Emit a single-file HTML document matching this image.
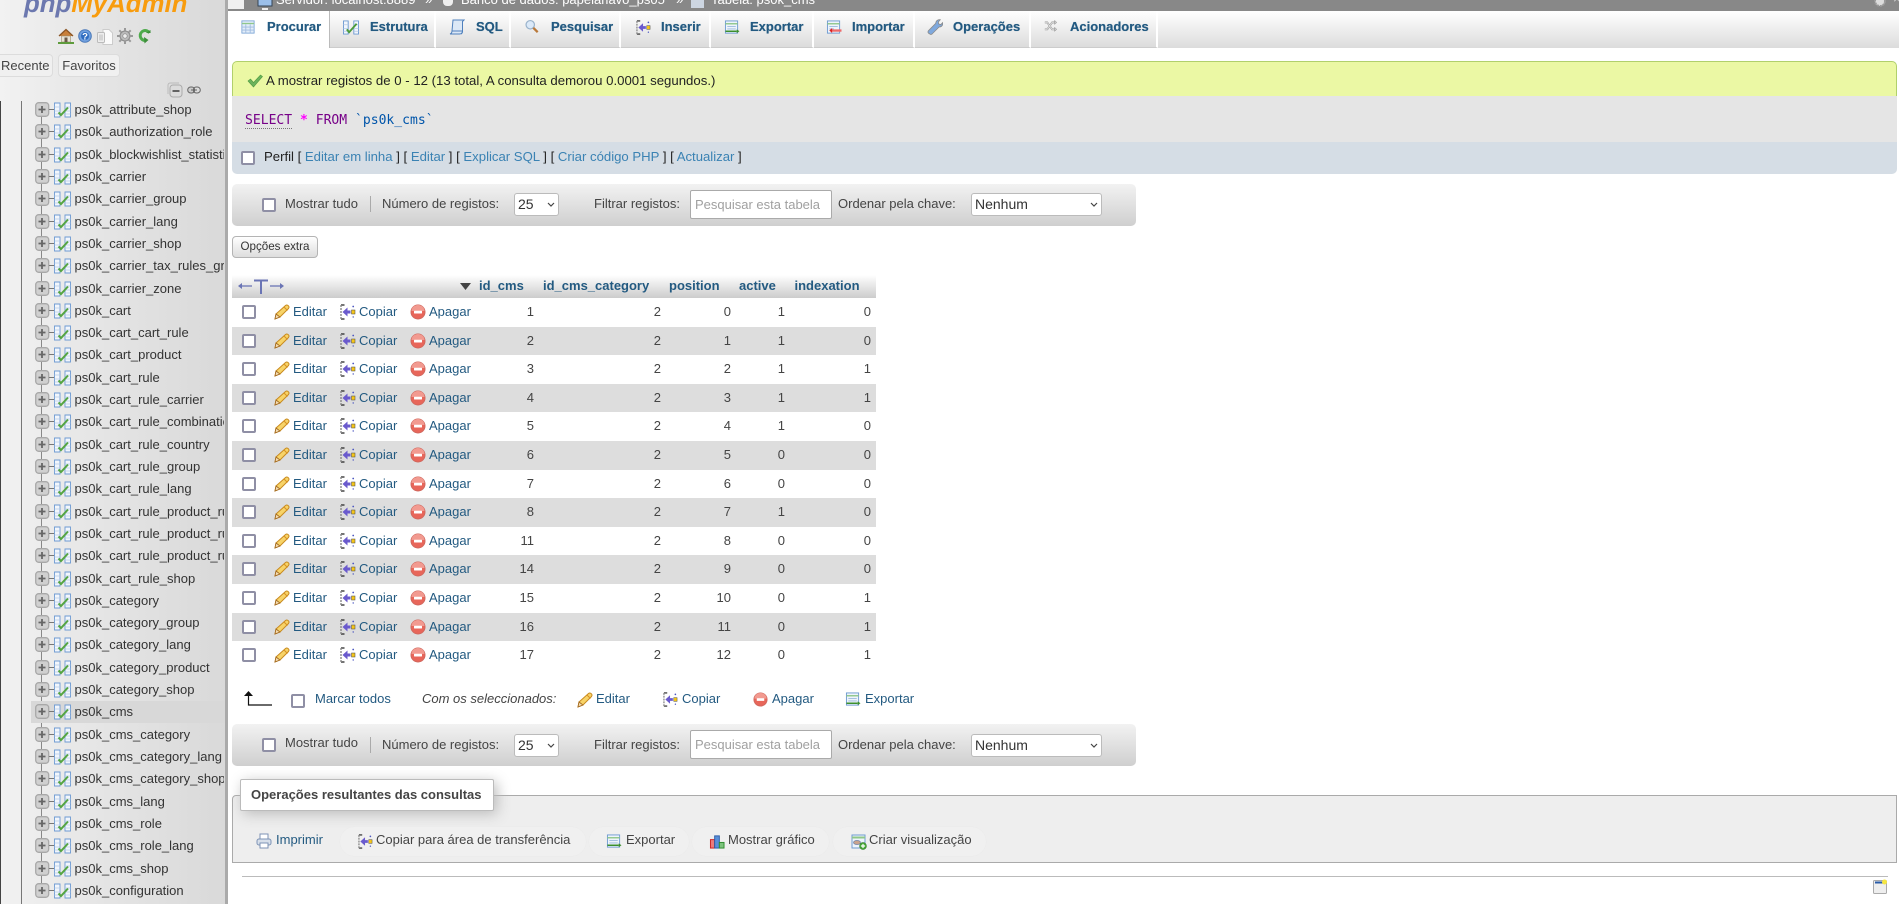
<!DOCTYPE html>
<html lang="pt"><head><meta charset="utf-8"><title>phpMyAdmin</title>
<style>
html,body{margin:0;padding:0;width:1899px;height:904px;overflow:hidden;background:#fff}
body{position:relative;font:13px/16px "Liberation Sans",Arial,sans-serif;color:#444}
.a{position:absolute;white-space:nowrap}
svg{position:absolute;overflow:visible}
a,.l{color:#235a81}
#side{position:absolute;left:0;top:0;width:225px;height:904px;overflow:hidden;background:linear-gradient(90deg,#f2f2f2,#e6e6e6 40%,#d9d9d9)}
#bar{position:absolute;left:225px;top:0;width:3px;height:904px;background:#aaa}
.t{position:absolute;left:31px;width:193px;height:22px;line-height:22px;padding-left:43.5px;box-sizing:border-box;overflow:hidden;white-space:nowrap;color:#333}
.t svg{left:4px;top:3px;width:40px;height:16px}
.tab{position:absolute;top:11px;height:37px;box-sizing:border-box;background:linear-gradient(#fff,#dcdcdc);border-right:2px solid #fff;border-bottom:1px solid #ccc}
.tl{position:absolute;top:19px;font-weight:bold;color:#235a81;white-space:nowrap;text-shadow:0 0 .5px #235a81}
.cb{position:absolute;width:10px;height:10px;background:#fff;border:2px solid #8f8fa5;border-radius:2px}
.nav{position:absolute;left:232px;width:904px;height:42px;border-radius:5px;background:linear-gradient(#f2f2f2,#cfcfcf)}
.sel{position:absolute;box-sizing:border-box;background:#fff;border:1px solid #bbb;border-radius:3px;height:23px;line-height:21px;padding-left:3px;color:#333;font-size:14px}
.sel svg{top:8px;width:8px;height:5px}
.inp{position:absolute;box-sizing:border-box;background:#fff;border:1px solid #aaa;border-radius:2px;height:29px;line-height:27px;padding-left:4px;color:#a0a0a0;white-space:nowrap;overflow:hidden}
.r{position:absolute;left:232px;width:644px;height:28.6px;line-height:27px}
.r .cb{left:10px;top:7px}
.r svg{width:16px;height:16px;top:6px}
.r span{position:absolute;white-space:nowrap;top:0}
.r .e{left:61px;color:#235a81}.r .c{left:127px;color:#235a81}.r .d{left:197px;color:#235a81}
.r .n{text-align:right;width:40px;color:#444}
.n1{left:262px}.n2{left:389px}.n3{left:459px}.n4{left:513px}.n5{left:599px}
.g{background:#ddd}
.i1{left:42px}.i2{left:108px}.i3{left:178px}
.th{position:absolute;top:278px;font-weight:bold;color:#235a81;white-space:nowrap}
.pill{position:absolute;top:827px;height:29px;border-radius:15px;background:#f0f0f0;box-shadow:0 0 1px #e6e6e6}
.lk{color:#3a82b3}
</style></head><body>
<svg width="0" height="0" style="position:absolute">
<defs>
<symbol id="tr" viewBox="0 0 40 16">
<rect x=".7" y=".7" width="13" height="13.600" rx="3" fill="#d0d0d0" stroke="#a8a8a8" stroke-width="1.300"/><path d="M3.500 7.500h7M7 4v7" stroke="#666" stroke-width="1.800"/><path d="M14 7.500h5" stroke="#777"/>
<g fill="#f2f6fc" stroke="#6d9ad2" stroke-width=".9"><path d="M19.500 1h5.500v14h-5.500zM30 1h5.500v14H30z"/></g><path d="M19.500 5h5.500M19.500 9h5.500M19.500 12h5.500M30 5h5.500M30 9h5.500M30 12h5.500" stroke="#b5cbe6" stroke-width=".8"/><path d="M23.500 10.500l2.500 2.500 7-7.500" fill="none" stroke="#55a542" stroke-width="2"/>
</symbol>
<symbol id="pen" viewBox="0 0 16 16"><path d="M1 15l1-5L11.500 1.500c1-.8 2-.6 2.800.2s1 1.700.2 2.800L6 13z" fill="#f7d368" stroke="#c98a1e"/><path d="M1 15l1-5 4 3z" fill="#f4dcb0" stroke="#a0661c" stroke-width=".8"/><path d="M10 3l3.500 3.500" stroke="#d98f20"/></symbol>
<symbol id="cp" viewBox="0 0 16 16"><path d="M1 1h3.500M1 15h3.500" stroke="#222" stroke-width="1.200"/><path d="M1 1v14" stroke="#888" stroke-width="1.400" stroke-dasharray="2 1"/><path d="M2.500 8l5-4.500V6.500h3v3h-3v3z" fill="#6a5acd"/><rect x="11.500" y="6" width="3.500" height="4" fill="#f5c518" stroke="#444" stroke-width=".5"/><circle cx="13.200" cy="2.500" r=".9" fill="#4a55c0"/><circle cx="13.200" cy="13" r=".7" fill="#4a55c0"/></symbol>
<symbol id="del" viewBox="0 0 16 16"><circle cx="8" cy="8" r="7" fill="#e8665a" stroke="#d0685e"/><path d="M1.500 7a6.500 6 0 0 1 13 0z" fill="#f29a90"/><rect x="4" y="6.700" width="8" height="2.800" rx=".5" fill="#fff"/></symbol>
<symbol id="ex" viewBox="0 0 16 16"><rect x="1" y="1" width="13" height="13" fill="#eef4fb" stroke="#6f9bd1"/><path d="M1 4h13" stroke="#8fc78a" stroke-width="1.500"/><path d="M3 7h9M3 9.500h9" stroke="#9ab8dc"/><path d="M1 12h12" stroke="#3c8f2c" stroke-width="1.600"/><path d="M13 10l3 2-3 2z" fill="#3c8f2c"/></symbol>
<symbol id="im" viewBox="0 0 16 16"><rect x="1" y="1" width="13" height="13" fill="#eef4fb" stroke="#6f9bd1"/><path d="M1 4h13" stroke="#8fc78a" stroke-width="1.500"/><path d="M3 7h9M3 9.500h5" stroke="#9ab8dc"/><path d="M5 10h11v2.500H5z" fill="#ee6a6a"/><path d="M6 8.500l-3 2.700 3 2.700z" fill="#d22"/></symbol>
<symbol id="tb" viewBox="0 0 16 16"><rect x="1" y="1" width="14" height="14" fill="#e2edf9" stroke="#7ba4d6"/><path d="M1 4h14" stroke="#8fc78a" stroke-width="1.500"/><path d="M1 8h14M1 11.500h14M5.500 5v10M10.500 5v10" stroke="#9ebbe0"/></symbol>
<symbol id="st" viewBox="0 0 16 16"><g fill="#f2f6fc" stroke="#6d9ad2"><path d="M0 1h5v14H0zM11 1h5v14h-5z"/></g><path d="M0 5h5M0 9h5M0 12h5M11 5h5M11 9h5M11 12h5" stroke="#b5cbe6" stroke-width=".8"/><path d="M3.500 10l2.500 3 8-9" fill="none" stroke="#4a9a38" stroke-width="2"/></symbol>
<symbol id="sq" viewBox="0 0 16 16"><path d="M4 1h11l-1.500 1.500V12c0 2-1 3-3 3H1c1.500-.5 2-1.500 2-3z" fill="#dce8f6" stroke="#4f80bd"/><path d="M12 15c1-.5 1.500-1.500 1.500-3H3" fill="none" stroke="#4f80bd"/></symbol>
<symbol id="se" viewBox="0 0 16 16"><circle cx="6" cy="6" r="4.800" fill="#dbe9f8" stroke="#9ab3cc" stroke-width="1.400"/><path d="M9.500 9.500l5 5" stroke="#b9793a" stroke-width="2.600"/></symbol>
<symbol id="wr" viewBox="0 0 16 16"><path d="M1.800 14.500c-1.200-1-1-2.200 0-3.200l7-7c0-2.500 2-4 4.500-3.500l-2 2.200.5 2 2 .5 2-2c.5 2.500-1.200 4.500-3.700 4.500l-7 7c-1 .7-2.100.5-2.800-.5z" fill="#7fa9de" stroke="#8a8a8a" stroke-width=".8"/></symbol>
<symbol id="tg" viewBox="0 0 16 16"><path d="M1 3h3l6 8.500h3M1 11.500h3l6-8.500h3" fill="none" stroke="#9a9a9a" stroke-width="2.200"/><path d="M1 3h3l6 8.500h3M1 11.500h3l6-8.500h3" fill="none" stroke="#eee" stroke-width=".8"/><path d="M13 .5l2.700 2.500L13 5.500zM13 9l2.700 2.500L13 14z" fill="#ccc" stroke="#888" stroke-width=".6"/></symbol>
<symbol id="pr" viewBox="0 0 16 16"><rect x="4" y="1" width="8" height="6" fill="#fff" stroke="#7d93b5"/><rect x="1" y="6" width="14" height="6" rx="2" fill="#d7dfea" stroke="#7d93b5"/><rect x="4" y="10" width="8" height="5" fill="#fff" stroke="#7d93b5"/></symbol>
<symbol id="gr" viewBox="0 0 16 16"><rect x="1" y="6" width="4.500" height="9" fill="#ec7b7b" stroke="#c22"/><rect x="5.500" y="2" width="5" height="13" fill="#5a8fd8" stroke="#2a5ca8"/><rect x="10.500" y="9" width="5" height="6" fill="#7cc37c" stroke="#2d8a2d"/></symbol>
<symbol id="vw" viewBox="0 0 16 16"><rect x="1" y="1" width="13" height="13" fill="#eef4fb" stroke="#6f9bd1"/><path d="M1 3.500h13" stroke="#8fc78a" stroke-width="2"/><ellipse cx="6" cy="8.500" rx="3.500" ry="2" fill="#c9a38c" stroke="#6f7fa0" stroke-width=".7"/><circle cx="12" cy="12" r="3.400" fill="#4caa3c" stroke="#2c7a22" stroke-width=".6"/><path d="M10 12h4M12 10v4" stroke="#fff" stroke-width="1.200"/></symbol>
</defs></svg>

<div id="side">
<div class="a" style="left:24px;top:-11px;font:italic bold 25.8px/30px 'Liberation Sans',sans-serif"><span style="color:#6c78af">php</span><span style="color:#f89c0e">MyAdmin</span></div>
<svg style="left:58px;top:28px" width="16" height="16" viewBox="0 0 16 16"><path d="M1 8l7-6.500L15 8" fill="#c9803a" stroke="#8a5526" stroke-width="1.300"/><rect x="3.500" y="8" width="9" height="6" fill="#e8e4d8" stroke="#9a8a6a" stroke-width=".6"/><rect x="6.500" y="9.500" width="3" height="4.500" fill="#6a5a4a"/><path d="M0 15h16" stroke="#5e9b3c" stroke-width="2"/></svg>
<svg style="left:78px;top:29px" width="14" height="14" viewBox="0 0 14 14"><circle cx="7" cy="7" r="6.300" fill="#6f9fde" stroke="#4a78b8"/><circle cx="7" cy="7" r="4" fill="#2f6cc0"/><text x="7" y="10.500" text-anchor="middle" font-size="9.500" font-weight="bold" fill="#fff" font-family="Liberation Sans">?</text></svg>
<svg style="left:97px;top:29px" width="16" height="16" viewBox="0 0 16 16"><path d="M6 .5h6l3.500 3.500v11.500H6z" fill="#fbfbfb" stroke="#ccc"/><rect x=".5" y="3.500" width="7" height="10" rx="1" fill="#eee" stroke="#bbb"/><path d="M3 5.500v6M5 5.500v6" stroke="#bbb"/></svg>
<svg style="left:117px;top:28px" width="16" height="16" viewBox="0 0 16 16"><circle cx="8" cy="8" r="5" fill="#bbb" stroke="#888"/><circle cx="8" cy="8" r="2.200" fill="#eee" stroke="#888" stroke-width=".7"/><path d="M8 0v3M8 13v3M0 8h3M13 8h3M2.300 2.300l2 2M11.700 11.700l2 2M13.700 2.300l-2 2M4.300 11.700l-2 2" stroke="#999" stroke-width="2"/></svg>
<svg style="left:138px;top:29px" width="13" height="15" viewBox="0 0 13 15"><path d="M11.500 4A5 5 0 1 0 7.500 11.500" fill="none" stroke="#4eaa4c" stroke-width="3"/><path d="M6 8l4.500 3L6.500 14.500zM8 4h4.500v-3" fill="#3d8f3b"/></svg>
<div class="a" style="left:-9px;top:54px;width:62px;height:23px;box-sizing:border-box;background:#f0f0f0;border:1px solid #dcdcdc;border-radius:4px;line-height:21px;padding-left:9px;color:#444">Recente</div>
<div class="a" style="left:58px;top:54px;width:62px;height:23px;box-sizing:border-box;background:#f0f0f0;border:1px solid #dcdcdc;border-radius:4px;line-height:21px;text-align:center;color:#444">Favoritos</div>
<svg style="left:167px;top:82px" width="16" height="16" viewBox="0 0 16 16"><rect x="3" y="3" width="12" height="12" rx="3" fill="#dcdcdc" stroke="#aaa"/><path d="M1 12V3c0-1 1-2 2-2h9" fill="none" stroke="#bbb"/><path d="M5.500 9h7" stroke="#555" stroke-width="1.800"/></svg>
<svg style="left:187px;top:86px" width="14" height="9" viewBox="0 0 14 9"><rect x=".7" y="1" width="7" height="6" rx="3" fill="#ccc" stroke="#666"/><rect x="6.300" y="1" width="7" height="6" rx="3" fill="none" stroke="#666"/><path d="M4 4h6" stroke="#666"/></svg>
<div class="a" style="left:0;top:101px;width:1px;height:803px;background:#444"></div>
<div class="a" style="left:21px;top:101px;width:1px;height:803px;background:#777"></div>
<div class="a" style="left:41px;top:110px;width:1px;height:781px;background:#888"></div>
<div class="t" style="top:99px"><svg><use href="#tr"/></svg>ps0k_attribute_shop</div>
<div class="t" style="top:121px"><svg><use href="#tr"/></svg>ps0k_authorization_role</div>
<div class="t" style="top:144px"><svg><use href="#tr"/></svg>ps0k_blockwishlist_statistics</div>
<div class="t" style="top:166px"><svg><use href="#tr"/></svg>ps0k_carrier</div>
<div class="t" style="top:188px"><svg><use href="#tr"/></svg>ps0k_carrier_group</div>
<div class="t" style="top:211px"><svg><use href="#tr"/></svg>ps0k_carrier_lang</div>
<div class="t" style="top:233px"><svg><use href="#tr"/></svg>ps0k_carrier_shop</div>
<div class="t" style="top:255px"><svg><use href="#tr"/></svg>ps0k_carrier_tax_rules_group_shop</div>
<div class="t" style="top:278px"><svg><use href="#tr"/></svg>ps0k_carrier_zone</div>
<div class="t" style="top:300px"><svg><use href="#tr"/></svg>ps0k_cart</div>
<div class="t" style="top:322px"><svg><use href="#tr"/></svg>ps0k_cart_cart_rule</div>
<div class="t" style="top:344px"><svg><use href="#tr"/></svg>ps0k_cart_product</div>
<div class="t" style="top:367px"><svg><use href="#tr"/></svg>ps0k_cart_rule</div>
<div class="t" style="top:389px"><svg><use href="#tr"/></svg>ps0k_cart_rule_carrier</div>
<div class="t" style="top:411px"><svg><use href="#tr"/></svg>ps0k_cart_rule_combination</div>
<div class="t" style="top:434px"><svg><use href="#tr"/></svg>ps0k_cart_rule_country</div>
<div class="t" style="top:456px"><svg><use href="#tr"/></svg>ps0k_cart_rule_group</div>
<div class="t" style="top:478px"><svg><use href="#tr"/></svg>ps0k_cart_rule_lang</div>
<div class="t" style="top:501px"><svg><use href="#tr"/></svg>ps0k_cart_rule_product_rule</div>
<div class="t" style="top:523px"><svg><use href="#tr"/></svg>ps0k_cart_rule_product_rule_group</div>
<div class="t" style="top:545px"><svg><use href="#tr"/></svg>ps0k_cart_rule_product_rule_value</div>
<div class="t" style="top:568px"><svg><use href="#tr"/></svg>ps0k_cart_rule_shop</div>
<div class="t" style="top:590px"><svg><use href="#tr"/></svg>ps0k_category</div>
<div class="t" style="top:612px"><svg><use href="#tr"/></svg>ps0k_category_group</div>
<div class="t" style="top:634px"><svg><use href="#tr"/></svg>ps0k_category_lang</div>
<div class="t" style="top:657px"><svg><use href="#tr"/></svg>ps0k_category_product</div>
<div class="t" style="top:679px"><svg><use href="#tr"/></svg>ps0k_category_shop</div>
<div class="t" style="top:701px;width:194px;background:#d8d8d8"><svg><use href="#tr"/></svg>ps0k_cms</div>
<div class="t" style="top:724px"><svg><use href="#tr"/></svg>ps0k_cms_category</div>
<div class="t" style="top:746px"><svg><use href="#tr"/></svg>ps0k_cms_category_lang</div>
<div class="t" style="top:768px"><svg><use href="#tr"/></svg>ps0k_cms_category_shop</div>
<div class="t" style="top:791px"><svg><use href="#tr"/></svg>ps0k_cms_lang</div>
<div class="t" style="top:813px"><svg><use href="#tr"/></svg>ps0k_cms_role</div>
<div class="t" style="top:835px"><svg><use href="#tr"/></svg>ps0k_cms_role_lang</div>
<div class="t" style="top:858px"><svg><use href="#tr"/></svg>ps0k_cms_shop</div>
<div class="t" style="top:880px"><svg><use href="#tr"/></svg>ps0k_configuration</div>
</div>
<div id="bar"></div>

<!-- top bar -->
<div class="a" style="left:228px;top:0;width:1671px;height:11px;background:#888;overflow:hidden;color:#fff">
<div class="a" style="left:0;top:0;width:16px;height:9px;background:#f0f0f0"></div>
<svg style="left:29px;top:-6px" width="16" height="16" viewBox="0 0 16 16"><rect x="1" y="1" width="14" height="11" fill="#9cc0ea" stroke="#345"/><path d="M5 15h6" stroke="#eee" stroke-width="2"/></svg>
<span class="a" style="left:48px;top:-8px">Servidor: localhost:8889</span>
<span class="a" style="left:197px;top:-8px">»</span>
<span class="a" style="left:215px;top:-4px;width:10px;height:10px;background:#eee;border-radius:4px"></span>
<span class="a" style="left:233px;top:-8px">Banco de dados: papelariavo_ps05</span>
<span class="a" style="left:448px;top:-8px">»</span>
<span class="a" style="left:463px;top:-4px;width:13px;height:12px;background:#cdd6e2"></span>
<span class="a" style="left:483px;top:-8px">Tabela: ps0k_cms</span>
<svg style="left:1645px;top:-6px" width="14" height="14" viewBox="0 0 14 14"><circle cx="7" cy="7" r="5" fill="#ddd" stroke="#999" stroke-width="2" stroke-dasharray="2 1"/></svg>
<span class="a" style="left:1665px;top:-9px;color:#ccc">×</span>
</div>

<!-- tabs -->
<div class="a" style="left:228px;top:11px;width:1671px;height:37px;background:linear-gradient(#fff,#dcdcdc)"></div>
<div class="a" style="left:228px;top:11px;width:102px;height:37px;background:#fff;border-right:1px solid #bbb;box-sizing:border-box"></div>
<div class="tab" style="left:330px;width:106px"></div>
<div class="tab" style="left:436px;width:75px"></div>
<div class="tab" style="left:511px;width:110px"></div>
<div class="tab" style="left:621px;width:90px"></div>
<div class="tab" style="left:711px;width:103px"></div>
<div class="tab" style="left:814px;width:101px"></div>
<div class="tab" style="left:915px;width:116px"></div>
<div class="tab" style="left:1031px;width:127px"></div>
<svg style="left:241px;top:20px" width="14" height="14"><use href="#tb"/></svg><span class="tl" style="left:267px">Procurar</span>
<svg style="left:343px;top:20px" width="16" height="15"><use href="#st"/></svg><span class="tl" style="left:370px">Estrutura</span>
<svg style="left:449px;top:19px" width="16" height="16"><use href="#sq"/></svg><span class="tl" style="left:476px">SQL</span>
<svg style="left:525px;top:19px" width="14" height="15"><use href="#se"/></svg><span class="tl" style="left:551px">Pesquisar</span>
<svg style="left:636px;top:20px" width="15" height="15"><use href="#cp"/></svg><span class="tl" style="left:661px">Inserir</span>
<svg style="left:724px;top:20px" width="16" height="15"><use href="#ex"/></svg><span class="tl" style="left:750px">Exportar</span>
<svg style="left:826px;top:20px" width="16" height="15"><use href="#im"/></svg><span class="tl" style="left:852px">Importar</span>
<svg style="left:927px;top:19px" width="16" height="16"><use href="#wr"/></svg><span class="tl" style="left:953px">Operações</span>
<svg style="left:1043px;top:20px" width="15" height="13"><use href="#tg"/></svg><span class="tl" style="left:1070px">Acionadores</span>

<!-- message -->
<div class="a" style="left:232px;top:61px;width:1665px;height:35px;box-sizing:border-box;background:#ebf8a4;border:1px solid #b1d06c;border-bottom:0;border-radius:5px 5px 0 0"></div>
<svg style="left:247px;top:74px" width="16" height="14" viewBox="0 0 16 14"><path d="M1 7l2.500-2 3 3.500L13.500 1 15.500 2.500 6.500 13z" fill="#6cb35c" stroke="#4e9a40" stroke-width=".6"/></svg>
<span class="a" style="left:266px;top:73px;color:#222;font-size:13.2px">A mostrar registos de 0 - 12 (13 total, A consulta demorou 0.0001 segundos.)</span>
<div class="a" style="left:232px;top:96px;width:1665px;height:46px;background:#e5e5e5"></div>
<div class="a" style="left:245px;top:113px;font:13.05px/16px 'DejaVu Sans Mono','Liberation Mono',monospace"><span style="color:#708;border-bottom:1px dotted #777">SELECT</span> <span style="color:#f0f;font-weight:bold">*</span> <span style="color:#708">FROM</span> <span style="color:#05a">`ps0k_cms`</span></div>
<div class="a" style="left:232px;top:142px;width:1665px;height:32px;background:#d5dde5;border-radius:0 0 5px 5px"></div>
<div class="cb" style="left:241px;top:151px"></div>
<span class="a" style="left:264px;top:149px;color:#222;font-size:13.15px">Perfil [ <span class="lk">Editar em linha</span> ] [ <span class="lk">Editar</span> ] [ <span class="lk">Explicar SQL</span> ] [ <span class="lk">Criar código PHP</span> ] [ <span class="lk">Actualizar</span> ]</span>

<!-- nav 1 -->
<div class="nav" style="top:184px"></div>
<div class="cb" style="left:262px;top:198px"></div>
<span class="a" style="left:285px;top:196px">Mostrar tudo</span>
<div class="a" style="left:370px;top:196px;width:1px;height:16px;background:#aaa"></div>
<span class="a" style="left:382px;top:196px">Número de registos:</span>
<div class="sel" style="left:514px;top:193px;width:45px">25<svg style="left:32px" viewBox="0 0 8 5"><path d="M1 1l3 3 3-3" fill="none" stroke="#444" stroke-width="1.200"/></svg></div>
<span class="a" style="left:594px;top:196px">Filtrar registos:</span>
<div class="inp" style="left:690px;top:190px;width:142px">Pesquisar esta tabela</div>
<span class="a" style="left:838px;top:196px">Ordenar pela chave:</span>
<div class="sel" style="left:971px;top:193px;width:131px">Nenhum<svg style="left:118px" viewBox="0 0 8 5"><path d="M1 1l3 3 3-3" fill="none" stroke="#444" stroke-width="1.200"/></svg></div>

<div class="a" style="left:232px;top:236px;width:86px;height:22px;box-sizing:border-box;border:1px solid #b4b4b4;border-radius:4px;background:linear-gradient(#fff,#ddd);text-align:center;line-height:20px;font-size:11.6px;color:#333">Opções extra</div>

<!-- table head -->
<div class="a" style="left:232px;top:275px;width:644px;height:23px;background:linear-gradient(#fff,#ccc)"></div>
<svg style="left:238px;top:279px" width="46" height="16" viewBox="0 0 46 16"><g stroke="#6b75b5" fill="#6b75b5"><path d="M3 7h11" stroke-width="1.300"/><path d="M0 7l4-3v6zM46 7l-4-3v6z" stroke="none"/><path d="M32 7h11" stroke-width="1.300"/><path d="M16 1.500h14M23 1.500V15" stroke-width="2" fill="none"/></g></svg>
<svg style="left:460px;top:283px" width="11" height="7" viewBox="0 0 11 7"><path d="M0 0h11L5.500 7z" fill="#444"/></svg>
<span class="th" style="left:479px">id_cms</span>
<span class="th" style="left:543px">id_cms_category</span>
<span class="th" style="left:669px">position</span>
<span class="th" style="left:739px">active</span>
<span class="th" style="left:794.500px">indexation</span>

<!-- rows -->
<div class="r" style="top:298px"><div class="cb"></div><svg class="i1"><use href="#pen"/></svg><span class="e">Editar</span><svg class="i2"><use href="#cp"/></svg><span class="c">Copiar</span><svg class="i3"><use href="#del"/></svg><span class="d">Apagar</span><span class="n n1">1</span><span class="n n2">2</span><span class="n n3">0</span><span class="n n4">1</span><span class="n n5">0</span></div>
<div class="r g" style="top:326.6px"><div class="cb"></div><svg class="i1"><use href="#pen"/></svg><span class="e">Editar</span><svg class="i2"><use href="#cp"/></svg><span class="c">Copiar</span><svg class="i3"><use href="#del"/></svg><span class="d">Apagar</span><span class="n n1">2</span><span class="n n2">2</span><span class="n n3">1</span><span class="n n4">1</span><span class="n n5">0</span></div>
<div class="r" style="top:355.2px"><div class="cb"></div><svg class="i1"><use href="#pen"/></svg><span class="e">Editar</span><svg class="i2"><use href="#cp"/></svg><span class="c">Copiar</span><svg class="i3"><use href="#del"/></svg><span class="d">Apagar</span><span class="n n1">3</span><span class="n n2">2</span><span class="n n3">2</span><span class="n n4">1</span><span class="n n5">1</span></div>
<div class="r g" style="top:383.8px"><div class="cb"></div><svg class="i1"><use href="#pen"/></svg><span class="e">Editar</span><svg class="i2"><use href="#cp"/></svg><span class="c">Copiar</span><svg class="i3"><use href="#del"/></svg><span class="d">Apagar</span><span class="n n1">4</span><span class="n n2">2</span><span class="n n3">3</span><span class="n n4">1</span><span class="n n5">1</span></div>
<div class="r" style="top:412.4px"><div class="cb"></div><svg class="i1"><use href="#pen"/></svg><span class="e">Editar</span><svg class="i2"><use href="#cp"/></svg><span class="c">Copiar</span><svg class="i3"><use href="#del"/></svg><span class="d">Apagar</span><span class="n n1">5</span><span class="n n2">2</span><span class="n n3">4</span><span class="n n4">1</span><span class="n n5">0</span></div>
<div class="r g" style="top:441px"><div class="cb"></div><svg class="i1"><use href="#pen"/></svg><span class="e">Editar</span><svg class="i2"><use href="#cp"/></svg><span class="c">Copiar</span><svg class="i3"><use href="#del"/></svg><span class="d">Apagar</span><span class="n n1">6</span><span class="n n2">2</span><span class="n n3">5</span><span class="n n4">0</span><span class="n n5">0</span></div>
<div class="r" style="top:469.6px"><div class="cb"></div><svg class="i1"><use href="#pen"/></svg><span class="e">Editar</span><svg class="i2"><use href="#cp"/></svg><span class="c">Copiar</span><svg class="i3"><use href="#del"/></svg><span class="d">Apagar</span><span class="n n1">7</span><span class="n n2">2</span><span class="n n3">6</span><span class="n n4">0</span><span class="n n5">0</span></div>
<div class="r g" style="top:498.2px"><div class="cb"></div><svg class="i1"><use href="#pen"/></svg><span class="e">Editar</span><svg class="i2"><use href="#cp"/></svg><span class="c">Copiar</span><svg class="i3"><use href="#del"/></svg><span class="d">Apagar</span><span class="n n1">8</span><span class="n n2">2</span><span class="n n3">7</span><span class="n n4">1</span><span class="n n5">0</span></div>
<div class="r" style="top:526.8px"><div class="cb"></div><svg class="i1"><use href="#pen"/></svg><span class="e">Editar</span><svg class="i2"><use href="#cp"/></svg><span class="c">Copiar</span><svg class="i3"><use href="#del"/></svg><span class="d">Apagar</span><span class="n n1">11</span><span class="n n2">2</span><span class="n n3">8</span><span class="n n4">0</span><span class="n n5">0</span></div>
<div class="r g" style="top:555.4px"><div class="cb"></div><svg class="i1"><use href="#pen"/></svg><span class="e">Editar</span><svg class="i2"><use href="#cp"/></svg><span class="c">Copiar</span><svg class="i3"><use href="#del"/></svg><span class="d">Apagar</span><span class="n n1">14</span><span class="n n2">2</span><span class="n n3">9</span><span class="n n4">0</span><span class="n n5">0</span></div>
<div class="r" style="top:584px"><div class="cb"></div><svg class="i1"><use href="#pen"/></svg><span class="e">Editar</span><svg class="i2"><use href="#cp"/></svg><span class="c">Copiar</span><svg class="i3"><use href="#del"/></svg><span class="d">Apagar</span><span class="n n1">15</span><span class="n n2">2</span><span class="n n3">10</span><span class="n n4">0</span><span class="n n5">1</span></div>
<div class="r g" style="top:612.6px"><div class="cb"></div><svg class="i1"><use href="#pen"/></svg><span class="e">Editar</span><svg class="i2"><use href="#cp"/></svg><span class="c">Copiar</span><svg class="i3"><use href="#del"/></svg><span class="d">Apagar</span><span class="n n1">16</span><span class="n n2">2</span><span class="n n3">11</span><span class="n n4">0</span><span class="n n5">1</span></div>
<div class="r" style="top:641.2px"><div class="cb"></div><svg class="i1"><use href="#pen"/></svg><span class="e">Editar</span><svg class="i2"><use href="#cp"/></svg><span class="c">Copiar</span><svg class="i3"><use href="#del"/></svg><span class="d">Apagar</span><span class="n n1">17</span><span class="n n2">2</span><span class="n n3">12</span><span class="n n4">0</span><span class="n n5">1</span></div>

<!-- footer actions -->
<svg style="left:244px;top:690px" width="28" height="16" viewBox="0 0 28 16"><path d="M4.500 5v10H28" fill="none" stroke="#111" stroke-width="1.200"/><path d="M0 6l4.500-5L9 6z" fill="#111"/></svg>
<div class="cb" style="left:291px;top:694px"></div>
<span class="a l" style="left:315px;top:691px">Marcar todos</span>
<span class="a" style="left:422px;top:691px;font-style:italic">Com os seleccionados:</span>
<svg style="left:577px;top:692px" width="16" height="16"><use href="#pen"/></svg><span class="a l" style="left:596px;top:691px">Editar</span>
<svg style="left:663px;top:692px" width="15" height="15"><use href="#cp"/></svg><span class="a l" style="left:682px;top:691px">Copiar</span>
<svg style="left:753px;top:692px" width="15" height="15"><use href="#del"/></svg><span class="a l" style="left:772px;top:691px">Apagar</span>
<svg style="left:845px;top:692px" width="16" height="15"><use href="#ex"/></svg><span class="a l" style="left:865px;top:691px">Exportar</span>

<!-- nav 2 -->
<div class="nav" style="top:724px"></div>
<div class="cb" style="left:262px;top:738px"></div>
<span class="a" style="left:285px;top:735px">Mostrar tudo</span>
<div class="a" style="left:370px;top:737px;width:1px;height:16px;background:#aaa"></div>
<span class="a" style="left:382px;top:737px">Número de registos:</span>
<div class="sel" style="left:514px;top:734px;width:45px">25<svg style="left:32px" viewBox="0 0 8 5"><path d="M1 1l3 3 3-3" fill="none" stroke="#444" stroke-width="1.200"/></svg></div>
<span class="a" style="left:594px;top:737px">Filtrar registos:</span>
<div class="inp" style="left:690px;top:730px;width:142px">Pesquisar esta tabela</div>
<span class="a" style="left:838px;top:737px">Ordenar pela chave:</span>
<div class="sel" style="left:971px;top:734px;width:131px">Nenhum<svg style="left:118px" viewBox="0 0 8 5"><path d="M1 1l3 3 3-3" fill="none" stroke="#444" stroke-width="1.200"/></svg></div>

<!-- fieldset -->
<div class="a" style="left:232px;top:795px;width:1665px;height:68px;box-sizing:border-box;background:#eee;border:1px solid #aaa;border-radius:4px 0 0 0"></div>
<div class="a" style="left:240px;top:779px;width:254px;height:32px;box-sizing:border-box;background:#fff;border:1px solid #bbb;border-radius:2px;box-shadow:3px 3px 14px #bbb;line-height:30px;padding-left:10px;font-weight:bold;color:#444">Operações resultantes das consultas</div>
<div class="pill" style="left:340px;width:246px"></div>
<div class="pill" style="left:589px;width:100px"></div>
<div class="pill" style="left:692px;width:137px"></div>
<div class="pill" style="left:833px;width:153px"></div>
<svg style="left:256px;top:833px" width="16" height="16"><use href="#pr"/></svg><span class="a l" style="left:276px;top:832px">Imprimir</span>
<svg style="left:358px;top:834px" width="15" height="15"><use href="#cp"/></svg><span class="a" style="left:376px;top:832px">Copiar para área de transferência</span>
<svg style="left:606px;top:834px" width="16" height="15"><use href="#ex"/></svg><span class="a" style="left:626px;top:832px">Exportar</span>
<svg style="left:709px;top:834px" width="16" height="15"><use href="#gr"/></svg><span class="a" style="left:728px;top:832px">Mostrar gráfico</span>
<svg style="left:851px;top:834px" width="16" height="16"><use href="#vw"/></svg><span class="a" style="left:869px;top:832px">Criar visualização</span>
<div class="a" style="left:242px;top:876px;width:1646px;height:1px;background:#bbb"></div>
<svg style="left:1873px;top:879px" width="15" height="15" viewBox="0 0 15 15"><rect x=".5" y="1.500" width="13" height="13" rx="1" fill="#eee" stroke="#aaa"/><rect x="2" y="2.500" width="8" height="2" fill="#2a5ca8"/><circle cx="11.500" cy="3" r="2.500" fill="#f5e642"/></svg>
</body></html>
